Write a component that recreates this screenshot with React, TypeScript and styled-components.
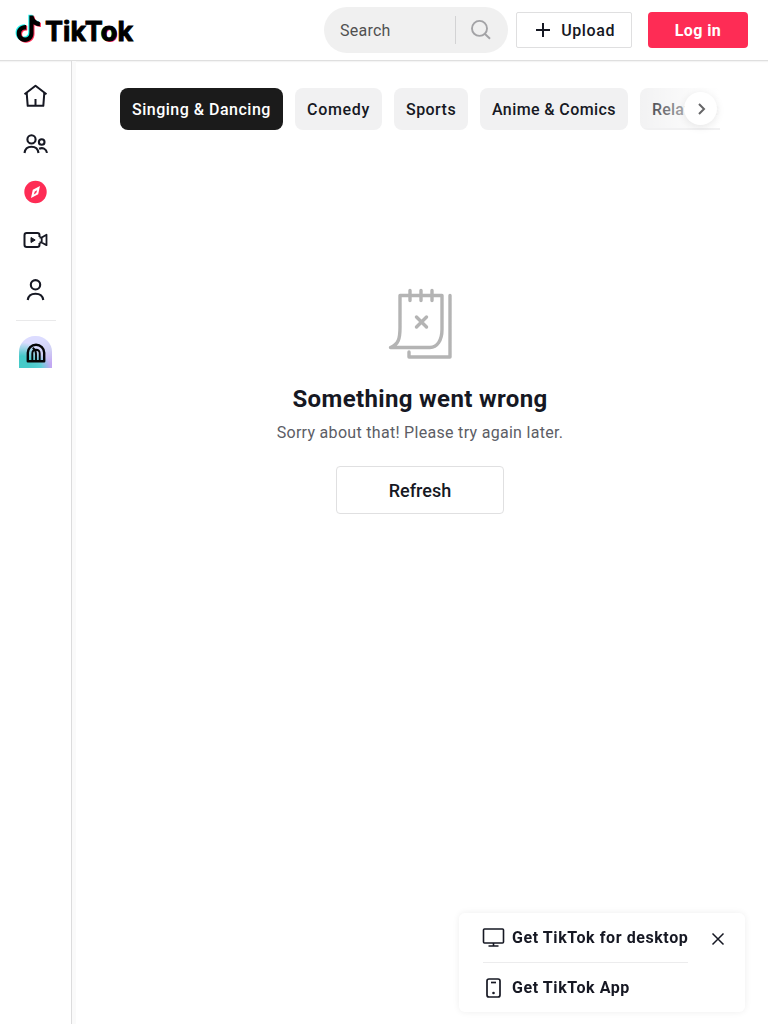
import React from "react";
import styled, { createGlobalStyle } from "styled-components";

const GlobalStyle = createGlobalStyle`
  *, *::before, *::after { box-sizing: border-box; }
  body {
    margin: 0;
    background: #fff;
    color: #161823;
    font-family: Roboto, "Liberation Sans", sans-serif;
  }
  button { font: inherit; color: inherit; border: 0; background: none; padding: 0; cursor: pointer; }
`;

const Page = styled.div`
  height: 1024px;
  display: flex;
  flex-direction: column;
  overflow: hidden;
`;

const Header = styled.header`
  flex: none;
  height: 61px;
  padding: 0 20px 0 15px;
  display: flex;
  align-items: center;
  border-bottom: 1px solid #dfdfdf;
  box-shadow: 0 1px 1px #f4f4f4;
`;

const Logo = styled.a`
  display: flex;
  align-items: center;
  margin: -2px auto 0 0;
`;

const Wordmark = styled.span`
  margin: 5px 0 0 4px;
  font: 700 27px/32px Inter, sans-serif;
  letter-spacing: 0.1px;
  color: #000;
  -webkit-text-stroke: 0.9px #000;
`;

const TintedLetter = styled.span`
  text-shadow: -1px -0.5px 0 #25f4ee, 1px 0.5px 0 #fe2c55;
`;

const Search = styled.div`
  width: 184px;
  height: 46px;
  padding: 0 16px;
  display: flex;
  align-items: center;
  border-radius: 23px;
  background: #f0f0f0;
  color: #505050;
  font-size: 16px;
  letter-spacing: 0.25px;
`;

const SearchText = styled.span`
  flex: 1;
`;

const SearchDivider = styled.span`
  width: 1px;
  height: 28px;
  margin-right: 14px;
  background: #d3d3d4;
`;

const UploadButton = styled.button`
  width: 116px;
  height: 36px;
  margin-left: 8px;
  padding: 0 16px 0 19px;
  display: flex;
  align-items: center;
  justify-content: space-between;
  border: 1px solid #dfdfe0;
  border-radius: 2px;
  font-size: 16px;
  font-weight: 500;
  letter-spacing: 0.6px;
`;

const LoginButton = styled.button`
  width: 100px;
  height: 36px;
  margin-left: 16px;
  border-radius: 4px;
  background: #fe2c55;
  color: #fff;
  font-size: 16px;
  font-weight: 700;
  letter-spacing: 0.4px;
`;

const Body = styled.div`
  flex: 1;
  display: flex;
`;

const Sidebar = styled.nav`
  width: 72px;
  padding-top: 11px;
  display: flex;
  flex-direction: column;
  align-items: center;
  border-right: 1px solid #dcdcdd;
  box-shadow: 4px 0 0 #fafafa;
`;

const NavItem = styled.a`
  width: 48px;
  height: 48px;
  display: flex;
  align-items: center;
  justify-content: center;
`;

const SidebarRule = styled.hr`
  width: 40px;
  height: 1px;
  margin: 8px 0 15px;
  border: 0;
  background: #e9e9ea;
`;

const EffectBadge = styled.a`
  width: 33px;
  height: 32px;
  display: flex;
  align-items: center;
  justify-content: center;
  border-radius: 16px 16px 0 0;
  background:
    radial-gradient(circle at 10% 85%, #45cac8 0 18%, transparent 52%),
    radial-gradient(circle at 55% 100%, #5fd0d6 0 10%, transparent 38%),
    linear-gradient(155deg, #dcdcff 30%, #d0d0f4 60%, #c3a8f3 90%);
`;

const Main = styled.main`
  flex: 1;
  min-width: 0;
  padding: 27px 48px 0;
`;

const ChipBar = styled.div`
  position: relative;
  height: 42px;
`;

const ChipTrack = styled.div`
  display: flex;
  gap: 12px;
  overflow: hidden;
`;

const Chip = styled.button<{ $width: number; $spacing: number; $active?: boolean }>`
  flex: none;
  width: ${(p) => p.$width}px;
  height: 42px;
  padding-left: 12px;
  text-align: left;
  white-space: nowrap;
  border-radius: 8px;
  background: ${(p) => (p.$active ? "#1b1b1b" : "#f1f1f2")};
  color: ${(p) => (p.$active ? "#fff" : "#161823")};
  font-size: 16px;
  font-weight: 500;
  letter-spacing: ${(p) => p.$spacing}px;
`;

const Fade = styled.div`
  position: absolute;
  top: 0;
  right: 0;
  width: 80px;
  height: 40px;
  background: linear-gradient(90deg, rgba(255, 255, 255, 0.1), rgba(255, 255, 255, 0.9) 85%, #fff);
`;

const NextButton = styled.button`
  position: absolute;
  top: 4px;
  right: 3px;
  width: 33px;
  height: 33px;
  padding-left: 2px;
  display: flex;
  align-items: center;
  justify-content: center;
  border-radius: 50%;
  background: #fff;
  box-shadow: 0 2px 8px rgba(0, 0, 0, 0.09);
`;

const ErrorState = styled.section`
  margin-top: 155px;
  display: flex;
  flex-direction: column;
  align-items: center;
`;

const ErrorTitle = styled.h1`
  margin: 21px 0 0;
  font: 700 24px/34px Roboto, sans-serif;
  letter-spacing: 0.35px;
`;

const ErrorText = styled.p`
  margin: 6px 0 0;
  font-size: 16px;
  line-height: 22px;
  letter-spacing: 0.3px;
  color: #5c5d65;
`;

const RefreshButton = styled.button`
  width: 168px;
  height: 48px;
  margin-top: 22px;
  border: 1px solid #e0e0e1;
  border-radius: 4px;
  font-size: 18px;
  font-weight: 500;
`;

const Promo = styled.aside`
  position: fixed;
  left: 459px;
  top: 913px;
  width: 286px;
  height: 99px;
  padding: 0 18px 0 24px;
  display: flex;
  border-radius: 6px;
  background: #fff;
  box-shadow: 0 0 7px rgba(0, 0, 0, 0.07);
`;

const PromoLinks = styled.div`
  width: 205px;
`;

const PromoLink = styled.a`
  height: 49px;
  display: flex;
  align-items: center;
  gap: 8px;
  font-size: 16px;
  font-weight: 700;
  letter-spacing: 0.58px;
  white-space: nowrap;
  & + & { border-top: 1px solid #ececed; height: 50px; }
`;

const CloseButton = styled.button`
  width: 18px;
  height: 18px;
  margin: 17px 0 0 auto;
  display: flex;
`;

const Icon = styled.svg`
  display: block;
  flex: none;
  fill: none;
  overflow: visible;
`;

const ErrorIcon = styled(Icon)`
  margin-left: 8px;
`;

const notePath =
  "M13 .5h4.1c.4 3.5 2.7 6 6.4 6.3v4.4c-2.4 0-4.5-.7-6.4-2v9c0 5.2-3.7 8.6-8.5 8.6S.3 23 .3 18.4c0-5 4-8.8 9.5-8.4v4.6c-3-.5-5.1 1.2-5.1 3.7 0 2.4 1.7 4 4 4 2.6 0 4.3-1.6 4.3-4.5Z";

const chips = [
  { label: "Singing & Dancing", width: 163, spacing: 0.5, active: true },
  { label: "Comedy", width: 87, spacing: 0.7 },
  { label: "Sports", width: 74, spacing: 0.45 },
  { label: "Anime & Comics", width: 148, spacing: 0.4 },
  { label: "Relationship", width: 118, spacing: 0.2 },
];

export default function App() {
  return (
    <Page>
      <GlobalStyle />
      <Header>
        <Logo>
          <Icon width="26" height="30" viewBox="0 0 26 30">
            <path d={notePath} fill="#25f4ee" transform="translate(.3 .3)" />
            <path d={notePath} fill="#fe2c55" transform="translate(2.4 1.9)" />
            <path d={notePath} fill="#000" transform="translate(1.4 1.1)" />
          </Icon>
          <Wordmark>
            TikT<TintedLetter>o</TintedLetter>k
          </Wordmark>
        </Logo>
        <Search>
          <SearchText>Search</SearchText>
          <SearchDivider />
          <Icon width="22" height="22" viewBox="0 0 22 22" stroke="#a3a3a6" strokeWidth="1.9">
            <circle cx="9.5" cy="9.4" r="7.5" />
            <path d="m15 15 5 4.8" />
          </Icon>
        </Search>
        <UploadButton>
          <Icon width="14" height="14" viewBox="0 0 14 14" stroke="#161823" strokeWidth="2">
            <path d="M0 7h14M7 0v14" />
          </Icon>
          Upload
        </UploadButton>
        <LoginButton>Log in</LoginButton>
      </Header>
      <Body>
        <Sidebar>
          <NavItem>
            <Icon width="24" height="24" viewBox=".5 0 24 24" stroke="#161823" strokeWidth="2" strokeLinejoin="round">
              <path d="M1 10.2 12 1.8l11 8.4M3.2 9.2l1 12.6h15.6l1-12.6M12 15v6.5" />
            </Icon>
          </NavItem>
          <NavItem>
            <Icon width="24" height="24" viewBox=".5 0 24 24" stroke="#161823" strokeWidth="2.1">
              <circle cx="8" cy="7.4" r="4.1" />
              <circle cx="18.2" cy="10" r="2.8" />
              <path d="M1 21c.5-4 3.3-6.300 7-6.300s6.500 2.300 7 6.300M15.600 16.700c3.500-1.500 7.100-.1 7.900 4.200" />
            </Icon>
          </NavItem>
          <NavItem>
            <Icon width="24" height="24" viewBox=".5 0 24 24">
              <circle cx="12" cy="12" r="11.2" fill="#fe2c55" />
              <path d="m16.500 6-1.800 8.200L7.500 18l1.800-8.200Z" fill="#fff" />
              <path d="m13.700 10.300-1 2.800-2.400 1.300 1-2.800Z" fill="#fe2c55" />
            </Icon>
          </NavItem>
          <NavItem>
            <Icon width="24" height="24" viewBox=".5 0 24 24" stroke="#161823" strokeWidth="2" strokeLinejoin="round">
              <path d="M16 9V7.200C16 6 15 5 13.800 5H3.200C2 5 1 6 1 7.200v9.600C1 18 2 19 3.200 19h10.600c1.200 0 2.200-1 2.200-2.200V15" />
              <path d="M16 9.500h2.200L23 6.800v10.400l-4.800-2.700H16M18.200 9.500v5" strokeWidth="1.800" />
              <path d="m7.500 9.500 4.200 2.500-4.200 2.500Z" fill="#161823" strokeWidth="1" />
            </Icon>
          </NavItem>
          <NavItem>
            <Icon width="24" height="24" viewBox=".5 0 24 24" stroke="#161823" strokeWidth="2.1">
              <circle cx="12" cy="8.800" r="4.700" />
              <path d="M4.200 24c.6-4 3.600-6.200 7.800-6.200s7.200 2.200 7.800 6.200" />
            </Icon>
          </NavItem>
          <SidebarRule />
          <EffectBadge>
            <Icon width="20" height="20" viewBox="0 -.5 20 20" stroke="#050505" strokeWidth="2.400" strokeLinejoin="round">
              <path d="M1.800 18.800v-8.500C1.800 5.600 5.500 2.300 10 2.300s8.200 3.300 8.200 8v8.500Z" />
              <path d="M6.300 19v-8c0-5 7.400-5 7.400 0v8M10 19v-7.500c0-3-1-4.700-3.300-6.300" strokeWidth="1.900" />
            </Icon>
          </EffectBadge>
        </Sidebar>
        <Main>
          <ChipBar>
            <ChipTrack>
              {chips.map((chip) => (
                <Chip key={chip.label} $width={chip.width} $spacing={chip.spacing} $active={chip.active}>
                  {chip.label}
                </Chip>
              ))}
            </ChipTrack>
            <Fade />
            <NextButton>
              <Icon width="8" height="12" viewBox="0 0 8 12" stroke="#656567" strokeWidth="2">
                <path d="m1 1 5 5-5 5" />
              </Icon>
            </NextButton>
          </ChipBar>
          <ErrorState>
            <ErrorIcon width="72" height="76" viewBox="0 0 72 76" stroke="#b4b4b4" strokeWidth="3.4" strokeLinecap="round" strokeLinejoin="round">
              <path d="M12 10.500h42v34c0 11-5 18-12 18H2.500c8-3 9.500-9 9.500-20ZM22 5.500v10M33 5.500v10M44 5.500v10M62 10.500v61.500H21v-5M28.500 32l10 10M38.500 32l-10 10" />
            </ErrorIcon>
            <ErrorTitle>Something went wrong</ErrorTitle>
            <ErrorText>Sorry about that! Please try again later.</ErrorText>
            <RefreshButton>Refresh</RefreshButton>
          </ErrorState>
        </Main>
      </Body>
      <Promo>
        <PromoLinks>
          <PromoLink>
            <Icon width="21" height="20" viewBox="0 0 21 20" stroke="#161823" strokeWidth="1.6">
              <rect x=".5" y="1" width="20" height="14" rx="1" />
              <path d="M10.500 15v3M5.500 18h10" />
            </Icon>
            Get TikTok for desktop
          </PromoLink>
          <PromoLink>
            <Icon width="21" height="20" viewBox="0 0 21 20" stroke="#161823" strokeWidth="1.7">
              <rect x="4" y="1" width="13" height="18" rx="2" />
              <path d="M8 4.500h5" />
              <circle cx="10.500" cy="15" r="1.300" fill="#161823" stroke="none" />
            </Icon>
            Get TikTok App
          </PromoLink>
        </PromoLinks>
        <CloseButton>
          <Icon width="18" height="18" viewBox="0 0 18 18" stroke="#161823" strokeWidth="1.5">
            <path d="m3.500 3.500 11 11M14.500 3.500l-11 11" />
          </Icon>
        </CloseButton>
      </Promo>
    </Page>
  );
}
